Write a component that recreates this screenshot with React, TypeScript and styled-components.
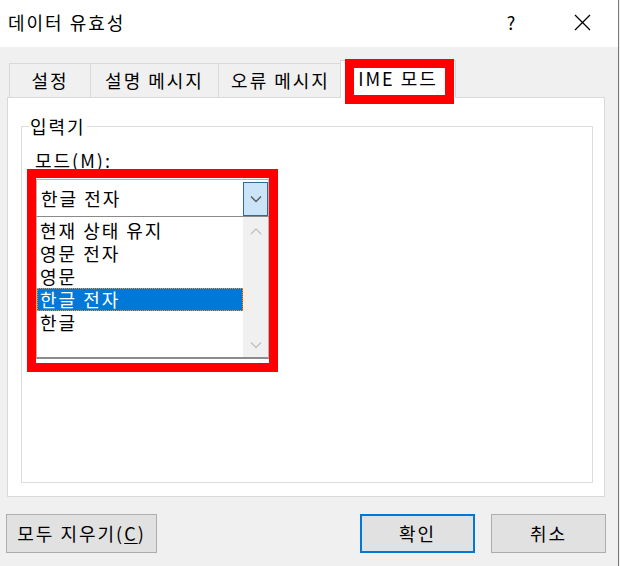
import React from 'react';
import styled, { createGlobalStyle } from 'styled-components';

const GlobalStyle = createGlobalStyle`
  html, body {
    margin: 0;
    padding: 0;
    background: #f0f0f0;
  }
  * {
    box-sizing: border-box;
  }
`;

const font = `"Noto Sans CJK KR", "Noto Sans", sans-serif`;

const Window = styled.div`
  width: 619px;
  height: 566px;
  background: #f0f0f0;
  border-right: 1px solid #777;
  display: flex;
  flex-direction: column;
  font-family: ${font};
  font-size: 18px;
  letter-spacing: 2px;
  color: #000;
`;

const TitleBar = styled.div`
  height: 47px;
  background: #fff;
  display: flex;
  align-items: center;
  padding-left: 8px;
`;

const Title = styled.div`
  flex: 1;
  line-height: 24px;
  margin-top: -3px;
`;

const TitleButton = styled.div<{ $width: number }>`
  width: ${(p) => p.$width}px;
  height: 47px;
  display: flex;
  align-items: center;
  justify-content: center;
  margin-top: -3px;
`;

const Content = styled.div`
  padding: 13px 13px 0 7px;
  display: flex;
  flex-direction: column;
`;

const TabStrip = styled.div`
  height: 37px;
  display: flex;
  align-items: flex-end;
  padding-left: 2px;
  position: relative;
  z-index: 2;
`;

const Tab = styled.div<{ $width: number; $active?: boolean }>`
  width: ${(p) => p.$width}px;
  height: ${(p) => (p.$active ? 38 : 34)}px;
  margin-left: ${(p) => (p.$active ? -3 : -1)}px;
  margin-right: ${(p) => (p.$active ? -2 : 0)}px;
  margin-bottom: ${(p) => (p.$active ? -1 : 0)}px;
  background: ${(p) => (p.$active ? '#fff' : '#f0f0f0')};
  border: 1px solid #d9d9d9;
  border-bottom: none;
  display: flex;
  align-items: center;
  justify-content: center;
  padding-bottom: ${(p) => (p.$active ? 4 : 2)}px;
  position: relative;
  z-index: ${(p) => (p.$active ? 3 : 1)};

  &:first-child {
    margin-left: 0;
  }
`;

const Highlight = styled.div<{ $top: number; $left: number; $right: number; $bottom: number }>`
  position: absolute;
  top: ${(p) => p.$top}px;
  left: ${(p) => p.$left}px;
  right: ${(p) => p.$right}px;
  bottom: ${(p) => p.$bottom}px;
  border: 9px solid #ff0000;
  pointer-events: none;
  z-index: 5;
`;

const Panel = styled.div`
  height: 400px;
  background: #fff;
  border: 1px solid #d9d9d9;
  padding: 16px 11px 0 13px;
  position: relative;
  z-index: 1;
`;

const Group = styled.fieldset`
  margin: 0;
  height: 369px;
  border: 1px solid #dcdcdc;
  padding: 10px 14px 0 14px;
`;

const Legend = styled.legend`
  margin-left: -7px;
  padding: 0 1px;
  line-height: 24px;
  color: #000;
`;

const Label = styled.div`
  line-height: 24px;
  margin-bottom: 7px;
  margin-left: -1px;
`;

const Mnemonic = styled.span`
  text-decoration: underline;
  text-underline-offset: 2px;
`;

const ComboWrap = styled.div`
  width: 233px;
  position: relative;
`;

const Combo = styled.div`
  height: 38px;
  border: 1px solid #b4b4b4;
  border-bottom: 1px solid #8a8a8a;
  display: flex;
  align-items: stretch;
  padding: 2px 0 0 4px;
`;

const ComboText = styled.div`
  flex: 1;
  display: flex;
  align-items: center;
  line-height: 24px;
  padding-bottom: 2px;
`;

const DropButton = styled.div`
  width: 25px;
  background: #cce4f7;
  border: 1px solid #2f6a9e;
  display: flex;
  align-items: center;
  justify-content: center;
`;

const List = styled.div`
  height: 142px;
  border: 1px solid #b4b4b4;
  border-top: none;
  border-bottom: 2px solid #8c8c8c;
  display: flex;
`;

const Items = styled.div`
  flex: 1;
  padding-top: 2px;
`;

const Item = styled.div<{ $selected?: boolean }>`
  height: 23px;
  line-height: 22px;
  padding-left: 3px;
  background: ${(p) => (p.$selected ? '#0078d7' : 'transparent')};
  color: ${(p) => (p.$selected ? '#fff' : '#000')};
  outline: ${(p) => (p.$selected ? '1px dotted #e39a4a' : 'none')};
  outline-offset: -1px;
`;

const ScrollBar = styled.div`
  width: 25px;
  background: #f0f0f0;
  display: flex;
  flex-direction: column;
  justify-content: space-between;
  align-items: center;
  padding: 10px 0 8px;
`;

const ButtonRow = styled.div`
  display: flex;
  justify-content: space-between;
  padding: 17px 12px 0 6px;
`;

const ButtonGroup = styled.div`
  display: flex;
  gap: 16px;
`;

const Button = styled.div<{ $width: number; $primary?: boolean }>`
  width: ${(p) => p.$width}px;
  height: 39px;
  background: #e1e1e1;
  border: ${(p) => (p.$primary ? '2px solid #0078d7' : '1px solid #adadad')};
  display: flex;
  align-items: center;
  justify-content: center;
  line-height: 24px;
  padding-bottom: 2px;
`;

const Chevron = ({ up, color }: { up?: boolean; color: string }) => (
  <svg width="12" height="8" viewBox="0 0 12 8">
    <path
      d={up ? 'M1 7 L6 2 L11 7' : 'M1 1.5 L6 6.5 L11 1.5'}
      fill="none"
      stroke={color}
      strokeWidth="1.4"
    />
  </svg>
);

const modes = ['현재 상태 유지', '영문 전자', '영문', '한글 전자', '한글'];

export default function App() {
  return (
    <>
      <GlobalStyle />
      <Window>
        <TitleBar>
          <Title>데이터 유효성</Title>
          <TitleButton $width={70}>?</TitleButton>
          <TitleButton $width={70}>
            <svg width="17" height="17" viewBox="0 0 17 17">
              <path d="M1 1 L16 16 M16 1 L1 16" stroke="#000" strokeWidth="1.3" />
            </svg>
          </TitleButton>
          <div style={{ width: 1 }} />
        </TitleBar>

        <Content>
          <TabStrip>
            <Tab $width={82}>설정</Tab>
            <Tab $width={129}>설명 메시지</Tab>
            <Tab $width={125}>오류 메시지</Tab>
            <Tab $width={116} $active>
              IME 모드
              <Highlight $top={-2} $left={4} $right={1} $bottom={-6} />
            </Tab>
          </TabStrip>

          <Panel>
            <Group>
              <Legend>입력기</Legend>
              <Label>
                모드(<Mnemonic>M</Mnemonic>):
              </Label>
              <ComboWrap>
                <Combo>
                  <ComboText>한글 전자</ComboText>
                  <DropButton>
                    <Chevron color="#5a5a5a" />
                  </DropButton>
                </Combo>
                <List>
                  <Items>
                    {modes.map((m) => (
                      <Item key={m} $selected={m === '한글 전자'}>
                        {m}
                      </Item>
                    ))}
                  </Items>
                  <ScrollBar>
                    <Chevron up color="#c2c2c2" />
                    <Chevron color="#c2c2c2" />
                  </ScrollBar>
                </List>
                <Highlight $top={-10} $left={-9} $right={-9} $bottom={-13} />
              </ComboWrap>
            </Group>
          </Panel>
        </Content>

        <ButtonRow>
          <Button $width={151}>
            <span>
              모두 지우기(<Mnemonic>C</Mnemonic>)
            </span>
          </Button>
          <ButtonGroup>
            <Button $width={115} $primary>
              확인
            </Button>
            <Button $width={115}>취소</Button>
          </ButtonGroup>
        </ButtonRow>
      </Window>
    </>
  );
}
